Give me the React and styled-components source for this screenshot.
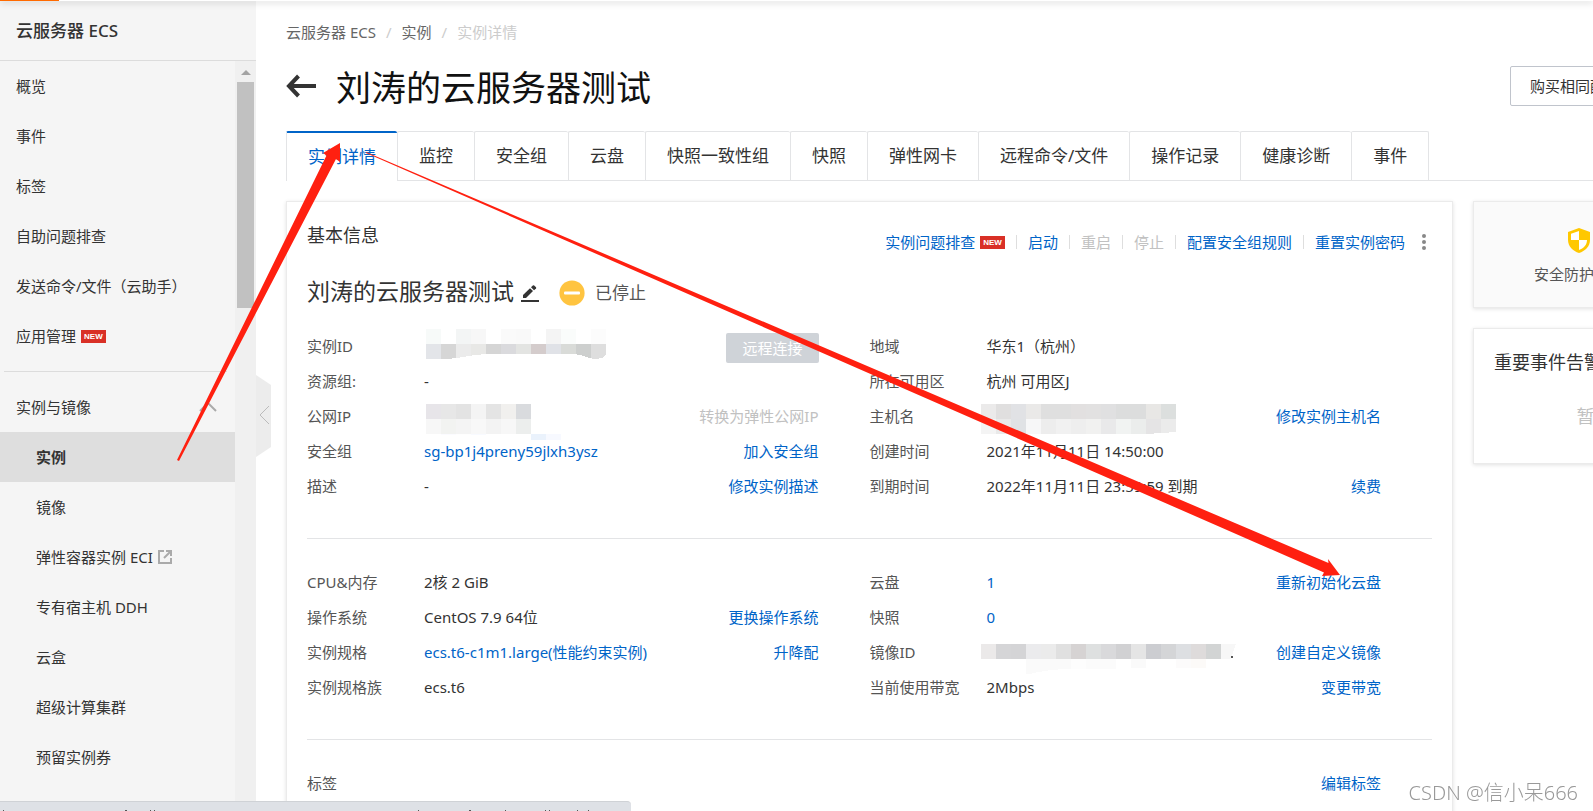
import React from 'react';
import styled, { createGlobalStyle } from 'styled-components';

const GlobalStyle = createGlobalStyle`
    * {
        box-sizing: border-box;
    }

    body {
        margin: 0;
        overflow: hidden;
        background: #fff;
        color: #333;
        font-family: "Noto Sans", "Noto Sans CJK SC", sans-serif;
        font-size: 15px;
        line-height: 24px;
    }

    a {
        color: inherit;
        text-decoration: none;
    }

    button {
        font: inherit;
        cursor: pointer;
    }
`;

const Layout = styled.div`
    display: flex;
    height: 100vh;
    overflow: hidden;
`;

const TopProgress = styled.div`
    position: fixed;
    top: 0;
    left: 0;
    right: 0;
    height: 1px;
    background: linear-gradient(90deg, #ff6a00 59px, #fff 59px);
    box-shadow: 0 1px 6px rgba(0, 0, 0, 0.5);
    z-index: 2;
`;

/* ---------- sidebar ---------- */

const Sidebar = styled.aside`
    flex: 0 0 256px;
    display: flex;
    flex-direction: column;
    background: #f5f5f5;
`;

const SidebarTitle = styled.div`
    flex: 0 0 61px;
    padding: 2px 16px 0;
    line-height: 58px;
    font-size: 17px;
    font-weight: 500;
    border-bottom: 1px solid #dcdcdc;
`;

const SidebarBody = styled.div`
    flex: 1;
    min-height: 0;
    display: flex;
`;

const Menu = styled.nav`
    flex: 1;
    overflow: hidden;
`;

const MenuItem = styled.a`
    display: flex;
    align-items: center;
    gap: 5px;
    height: 50px;
    padding-left: ${props => props.$nested ? '36px' : '16px'};
    padding-right: 18px;
    font-weight: ${props => props.$active ? 700 : 400};
    background: ${props => props.$active ? '#dedede' : 'transparent'};
`;

const MenuGroup = styled.button`
    display: flex;
    align-items: center;
    justify-content: space-between;
    width: 100%;
    height: 50px;
    padding: 0 18px 0 16px;
    border: 0;
    background: none;
    color: inherit;
`;

const MenuDivider = styled.hr`
    margin: 10px 8px 10px 4px;
    border: 0;
    border-top: 1px solid #dcdcdc;
`;

const ScrollTrack = styled.div`
    flex: 0 0 21px;
    display: flex;
    flex-direction: column;
    align-items: center;
    padding-top: 9px;
    background: #f0f0f0;
`;

const ScrollThumb = styled.div`
    width: 17px;
    height: 226px;
    margin-top: 7px;
    background: #c1c1c1;
`;

const CollapseButton = styled.button`
    position: absolute;
    left: 256px;
    top: 375px;
    padding: 0;
    border: 0;
    background: none;
    line-height: 0;
`;

const Badge = styled.span`
    padding: 0 3px;
    font-family: "Liberation Sans", Arial, sans-serif;
    font-size: 8px;
    font-weight: 700;
    line-height: 13px;
    color: #fff;
    background: #d93026;
`;

/* ---------- main ---------- */

const Main = styled.main`
    flex: 1 0 auto;
    min-width: 1660px;
    padding: 17px 20px 0 30px;
`;

const Breadcrumb = styled.nav`
    display: flex;
    gap: 10px;
    line-height: 30px;
    color: #666;
`;

const Muted = styled.span`
    color: #ccc;
`;

const Header = styled.header`
    display: flex;
    align-items: center;
    gap: 19px;
    margin: 15px 0 21px;
    height: 48px;
`;

const BackLink = styled.a`
    line-height: 0;
`;

const Title = styled.h1`
    flex: 1;
    margin: 0;
    padding-top: 4px;
    font-size: 35px;
    font-weight: 400;
    line-height: 48px;
    color: #111;
`;

const HeaderActions = styled.div`
    display: flex;
    gap: 10px;
    flex: 0 0 386px;
`;

const OutlineButton = styled.button`
    height: 40px;
    padding: 0 19px;
    border: 1px solid #c0c4cc;
    border-radius: 2px;
    background: #fff;
    color: #333;
`;

const Tabs = styled.div`
    display: flex;
    height: 50px;
    border-bottom: 1px solid #e3e4e6;
`;

const Tab = styled.button`
    height: ${props => props.$active ? '50px' : '49px'};
    padding: 0 21px;
    border: 0;
    border-left: 1px solid #e3e4e6;
    border-top: ${props => props.$active ? '2px solid #0064c8' : '1px solid #e3e4e6'};
    border-radius: 2px 2px 0 0;
    background: #fff;
    font-size: 17px;
    color: ${props => props.$active ? '#0064c8' : '#333'};

    &:last-child {
        border-right: 1px solid #e3e4e6;
    }
`;

const Columns = styled.div`
    display: grid;
    grid-template-columns: minmax(0, 1167px) minmax(0, 1fr);
    gap: 20px;
    align-items: start;
    margin-top: 20px;
`;

const Card = styled.section`
    padding: 20px;
    border: 1px solid #ebebeb;
    background: ${props => props.$grey ? '#fafafa' : '#fff'};
    box-shadow: 0 1px 4px rgba(0, 0, 0, 0.12);
`;

const CardHead = styled.div`
    display: flex;
    justify-content: space-between;
    height: 34px;
`;

const CardTitle = styled.h2`
    margin: 0;
    font-size: 18px;
    font-weight: 400;
    line-height: 26px;
`;

const Actions = styled.div`
    display: flex;
    align-items: center;
    height: 28px;
    margin-top: 6px;
`;

const Action = styled.button`
    display: flex;
    align-items: center;
    gap: 5px;
    padding: 0 11px;
    border: 0;
    background: none;
    line-height: 14px;
    color: #0064c8;

    & + & {
        border-left: 1px solid #dedede;
    }

    &:disabled {
        color: #c1c1c1;
    }
`;

const MoreButton = styled.button`
    padding: 0 6px;
    border: 0;
    background: none;
    line-height: 0;
`;

const NameRow = styled.div`
    display: flex;
    align-items: center;
    height: 34px;
    margin: 20px 0 18px;
`;

const InstanceName = styled.h3`
    align-self: flex-start;
    margin: 0 7px 0 0;
    font-size: 23px;
    font-weight: 400;
    line-height: 30px;
`;

const IconButton = styled.button`
    margin-right: 20px;
    padding: 0;
    border: 0;
    background: none;
    line-height: 0;
`;

const Status = styled.span`
    display: flex;
    align-items: center;
    gap: 10px;
    font-size: 17px;
    color: #555;
`;

const Section = styled.div`
    display: grid;
    grid-template-columns: 1fr 1fr;

    & + & {
        margin-top: 35px;
        padding-top: 25px;
        border-top: 1px solid #e3e4e6;
    }
`;

const Fields = styled.dl`
    margin: 0;
    padding-right: 51px;
`;

const Field = styled.div`
    display: flex;
    align-items: center;
    height: 35px;
    white-space: nowrap;
`;

const Label = styled.dt`
    flex: 0 0 117px;
    color: #555;
`;

const Value = styled.dd`
    flex: 1;
    margin: 0;
    color: ${props => props.$link ? '#0064c8' : '#333'};
`;

const FieldAction = styled.dd`
    margin: 0;
    color: ${props => props.$disabled ? '#c1c1c1' : '#0064c8'};
`;

const ConnectAction = styled(FieldAction)`
    align-self: flex-end;
    height: 30px;
`;

const ConnectButton = styled.button`
    height: 30px;
    padding: 0 16px;
    border: 0;
    border-radius: 2px;
    background: #cfd3d8;
    color: #fff;
`;

const MosaicSvg = styled.svg`
    display: block;
    overflow: visible;
`;

const SideColumn = styled.div`
    display: grid;
    gap: 20px;
`;

const StatGrid = styled.div`
    display: grid;
    grid-template-columns: 212px 1fr;
    margin: 0 -21px;
`;

const Stat = styled.div`
    display: flex;
    flex-direction: column;
    align-items: center;
    gap: 9px;
    padding-top: 6px;
    height: 65px;
    color: #555;
`;

const Empty = styled.p`
    margin: 27px 0 13px;
    font-size: 18px;
    line-height: 28px;
    text-align: center;
    color: #c1c1c1;
`;

/* ---------- overlays ---------- */

const StatusBar = styled.div`
    position: fixed;
    left: 0;
    bottom: 0;
    width: 631px;
    height: 10px;
    border-top: 1px solid #cfd2d6;
    border-top-right-radius: 4px;
    background: #dee1e6;
    line-height: 0;
`;

const Watermark = styled.div`
    position: fixed;
    right: 15px;
    bottom: 4px;
    font-size: 20px;
    font-weight: 300;
    line-height: 28px;
    color: #999;
    text-shadow: 0 0 2px #fff;
`;

const ArrowLayer = styled.svg`
    position: fixed;
    left: 0;
    top: 0;
    pointer-events: none;
    z-index: 3;
`;

const MENU = ['概览', '事件', '标签', '自助问题排查', '发送命令/文件（云助手）'];

const SUB_MENU = ['镜像', '弹性容器实例 ECI', '专有宿主机 DDH', '云盒', '超级计算集群', '预留实例券'];

const TABS = ['实例详情', '监控', '安全组', '云盘', '快照一致性组', '快照', '弹性网卡',
    '远程命令/文件', '操作记录', '健康诊断', '事件'];

// One string per mosaic row, a colour for each 15px cell.
const MOSAICS = {
    instance: {
        x: 2,
        y: 1,
        rows: [
            '#f7faf9 #fff #f3f5f5 #f7f7f7 #fff #fafafa #f9f9f9 #fff #f4f4f4 #fafcfb #fff #fcfcfc',
            '#e3e5e9 #d6d6d6 #ebebeb #e8e8e6 #d5d5d5 #dadadd #e3e4e2 #d4cccc #e0e2e7 #d9dbd8 #cdcfce #dedede',
        ],
        cut: 'M17 31C40 31 42 26 70 26H150C162 27 164 31 172 31Q182 30 182 26V32H17Z',
    },
    ip: {
        x: 2,
        y: 6,
        rows: [
            '#e7e5e9 #e7e7e7 #e3e3e3 #f4f4f4 #e4e4e4 #f1f0ee #d9dbde',
            '#f7f7f7 #f2f3f1 #f4f4f4 #f8f8f8 #f3f3f3 #f7f7f7 #eceeed',
            '#fff #fbfbff #fefefe #f8faff #fff #fff #fff #eaf2fc #f7f9ff',
        ],
        cut: 'M2 52V37H107V42H138Q140 38 140 36V52Z',
    },
    host: {
        x: -6,
        y: 6,
        rows: [
            '#ebeaea #e0dfdf #e1e2e5 #eae9e8 #dfdfdf #dfdfdf #e2e0e0 #e2e1e1 #e0e0e1 #dcdddd #dcdddd #e8e7e5 #dcdfde',
            '#f4f4f4 #e9e9e9 #e0e2e5 #f7f7f8 #ededed #f1f1f1 #eeeeee #f1f1f0 #e9e9ea #f1f3f2 #ebedec #e5e4e5 #ebebeb',
        ],
        cut: 'M159 36Q174 35 189 34V37H159Z',
    },
    image: {
        x: -6,
        y: 10,
        rows: [
            '#ebe9e9 #d5d5d7 #d4d4d6 #ebebed #ebebeb #e0e0e0 #d6d3d3 #dee0e0 #d9d9db #d1d1d3 #e5e5e5 #cccdd1 #d4d5d7 #dddfe2 #dedbdb #d2d4d4 #f7f7f7',
            '#fff #fff #fff #fafafa #fafafa #fafafa #fdfdfd #fbfbfb #fbfbfb #fff #fafafa #fff #fff #fcfbfb #fcfaf8 #fff #fff',
        ],
        cut: 'M39 41Q60 35 84 35L180 34H249V25H244L249 10V42H39Z',
        dot: true,
    },
};

const BASIC_LEFT = [
    { label: '实例ID', mosaic: 'instance', connect: true },
    { label: '资源组:', value: '-' },
    { label: '公网IP', mosaic: 'ip', action: '转换为弹性公网IP', disabled: true },
    { label: '安全组', value: 'sg-bp1j4preny59jlxh3ysz', link: true, action: '加入安全组' },
    { label: '描述', value: '-', action: '修改实例描述' },
];

const BASIC_RIGHT = [
    { label: '地域', value: '华东1（杭州）' },
    { label: '所在可用区', value: '杭州 可用区J' },
    { label: '主机名', mosaic: 'host', action: '修改实例主机名' },
    { label: '创建时间', value: '2021年11月11日 14:50:00' },
    { label: '到期时间', value: '2022年11月11日 23:59:59 到期', action: '续费' },
];

const CONFIG_LEFT = [
    { label: 'CPU&内存', value: '2核 2 GiB' },
    { label: '操作系统', value: 'CentOS 7.9 64位', action: '更换操作系统' },
    { label: '实例规格', value: 'ecs.t6-c1m1.large(性能约束实例)', link: true, action: '升降配' },
    { label: '实例规格族', value: 'ecs.t6' },
];

const CONFIG_RIGHT = [
    { label: '云盘', value: '1', link: true, action: '重新初始化云盘' },
    { label: '快照', value: '0', link: true },
    { label: '镜像ID', mosaic: 'image', action: '创建自定义镜像' },
    { label: '当前使用带宽', value: '2Mbps', action: '变更带宽' },
];

function Mosaic({ name }) {
    const { x, y, rows, cut, dot } = MOSAICS[name];
    return (
        <MosaicSvg width="240" height="35" viewBox="0 0 240 35" shapeRendering="crispEdges">
            {rows.map((row, r) => row.split(' ').map((fill, c) => (
                <rect key={`${r}-${c}`} x={x + c * 15} y={y + r * 15} width="15" height="15" fill={fill} />
            )))}
            <path d={cut} fill="#fff" />
            {dot && <rect x="244" y="22" width="2" height="2" fill="#555" />}
        </MosaicSvg>
    );
}

function FieldList({ items }) {
    return (
        <Fields>
            {items.map(item => (
                <Field key={item.label}>
                    <Label>{item.label}</Label>
                    <Value $link={item.link}>
                        {item.mosaic && <Mosaic name={item.mosaic} />}
                        {item.link ? <a href="#detail">{item.value}</a> : item.value}
                    </Value>
                    {item.connect && (
                        <ConnectAction><ConnectButton disabled>远程连接</ConnectButton></ConnectAction>
                    )}
                    {item.action && (
                        <FieldAction $disabled={item.disabled}>
                            {item.disabled ? item.action : <a href="#edit">{item.action}</a>}
                        </FieldAction>
                    )}
                </Field>
            ))}
        </Fields>
    );
}

function ExternalIcon() {
    return (
        <svg width="14" height="14" viewBox="0 0 14 14" fill="none" stroke="#aaa" strokeWidth="2">
            <path d="M6 1H1V13H13V8" />
            <path d="M8 1H13V6M13 1L6 8" />
        </svg>
    );
}

function SideMenu() {
    return (
        <Sidebar>
            <SidebarTitle>云服务器 ECS</SidebarTitle>
            <SidebarBody>
                <Menu>
                    {MENU.map(item => <MenuItem key={item} href="#menu">{item}</MenuItem>)}
                    <MenuItem href="#menu">应用管理<Badge>NEW</Badge></MenuItem>
                    <MenuDivider />
                    <MenuGroup>
                        实例与镜像
                        <svg width="18" height="10" viewBox="0 0 18 10" fill="none" stroke="#aaa" strokeWidth="2">
                            <path d="M1 9L9 1L17 9" />
                        </svg>
                    </MenuGroup>
                    <MenuItem href="#menu" $nested $active>实例</MenuItem>
                    {SUB_MENU.map(item => (
                        <MenuItem key={item} href="#menu" $nested>
                            {item}
                            {item.endsWith('ECI') && <ExternalIcon />}
                        </MenuItem>
                    ))}
                </Menu>
                <ScrollTrack>
                    <svg width="10" height="5" viewBox="0 0 10 5"><path d="M0 5L5 0L10 5Z" fill="#a3a3a3" /></svg>
                    <ScrollThumb />
                </ScrollTrack>
            </SidebarBody>
            <CollapseButton aria-label="收起">
                <svg width="15" height="82" viewBox="0 0 15 82" fill="none">
                    <path d="M0 0L15 10V72L0 82Z" fill="#ececec" />
                    <path d="M13 31L4 40L13 49" stroke="#bbb" />
                </svg>
            </CollapseButton>
        </Sidebar>
    );
}

function InstanceCard() {
    return (
        <Card>
            <CardHead>
                <CardTitle>基本信息</CardTitle>
                <Actions>
                    <Action>实例问题排查<Badge>NEW</Badge></Action>
                    <Action>启动</Action>
                    <Action disabled>重启</Action>
                    <Action disabled>停止</Action>
                    <Action>配置安全组规则</Action>
                    <Action>重置实例密码</Action>
                    <MoreButton aria-label="更多">
                        <svg width="4" height="16" viewBox="0 0 4 16" fill="#888">
                            <circle cx="2" cy="2" r="2" />
                            <circle cx="2" cy="8" r="2" />
                            <circle cx="2" cy="14" r="2" />
                        </svg>
                    </MoreButton>
                </Actions>
            </CardHead>
            <NameRow>
                <InstanceName>刘涛的云服务器测试</InstanceName>
                <IconButton aria-label="编辑">
                    <svg width="18" height="17" viewBox="0 0 18 17" fill="#333">
                        <path d="M2 13V10L9 3.200L12 6L5 13Z" />
                        <path d="M10 2.200L11.800 .5Q12.500 0 13.200 .6L15 2.300Q15.500 3 15 3.500L13 5.200Z" />
                        <path d="M0 15H18V17H0Z" />
                    </svg>
                </IconButton>
                <Status>
                    <svg width="26" height="26" viewBox="0 0 26 26">
                        <circle cx="13" cy="13" r="12.600" fill="#ffc440" />
                        <rect x="5" y="11.500" width="16" height="3" rx="1" fill="#fff" />
                    </svg>
                    已停止
                </Status>
            </NameRow>
            <Section>
                <FieldList items={BASIC_LEFT} />
                <FieldList items={BASIC_RIGHT} />
            </Section>
            <Section>
                <FieldList items={CONFIG_LEFT} />
                <FieldList items={CONFIG_RIGHT} />
            </Section>
            <Section>
                <FieldList items={[{ label: '标签' }]} />
                <FieldList items={[{ label: '', action: '编辑标签' }]} />
            </Section>
        </Card>
    );
}

function App() {
    return (
        <>
            <GlobalStyle />
            <TopProgress />
            <Layout>
                <SideMenu />
                <Main>
                    <Breadcrumb>
                        <a href="#ecs">云服务器 ECS</a>
                        <Muted>/</Muted>
                        <a href="#list">实例</a>
                        <Muted>/</Muted>
                        <Muted>实例详情</Muted>
                    </Breadcrumb>
                    <Header>
                        <BackLink href="#list" aria-label="返回">
                            <svg width="31" height="24" viewBox="0 0 31 24" fill="none" stroke="#333" strokeWidth="4">
                                <path d="M12.500 2L3 12L12.500 22M3 12H30" />
                            </svg>
                        </BackLink>
                        <Title>刘涛的云服务器测试</Title>
                        <HeaderActions>
                            <OutlineButton>购买相同配置</OutlineButton>
                        </HeaderActions>
                    </Header>
                    <Tabs role="tablist">
                        {TABS.map((tab, i) => (
                            <Tab key={tab} role="tab" aria-selected={i === 0} $active={i === 0}>{tab}</Tab>
                        ))}
                    </Tabs>
                    <Columns>
                        <InstanceCard />
                        <SideColumn>
                            <Card $grey>
                                <StatGrid>
                                    <Stat>
                                        <svg width="22" height="25" viewBox="0 0 22 25">
                                            <path d="M11 0L22 4V12C22 18.500 17 23 11 25C5 23 0 18.500 0 12V4Z" fill="#ffc800" />
                                            <path d="M11 3V12H3V5.700ZM11 12H19C19 17 15.500 20.500 11 22Z" fill="#fff" />
                                        </svg>
                                        安全防护状态
                                    </Stat>
                                </StatGrid>
                            </Card>
                            <Card>
                                <CardTitle>重要事件告警</CardTitle>
                                <Empty>暂无未处理的重要事件告警</Empty>
                            </Card>
                        </SideColumn>
                    </Columns>
                </Main>
            </Layout>
            <StatusBar>
                <svg width="631" height="9" viewBox="0 0 631 9" fill="#555">
                    <path d="M101 -1h25v1h-25z" fill="#d07a76" />
                    <path d="M3 8h1v1h-1zM125 8h2v1h-2zM150 8h1v1h-1zM154 8h1v1h-1zM418 8h1v1h-1zM469 8h2v1h-2zM505 8h1v1h-1zM545 8h1v1h-1zM549 8h1v1h-1zM577 8h1v1h-1zM588 8h1v1h-1z" />
                </svg>
            </StatusBar>
            <Watermark>CSDN @信小呆666</Watermark>
            <ArrowLayer width="1593" height="811" viewBox="0 0 1593 811" fill="#ff2010">
                <path d="M177 460L326.500 155.500L323 153L340 143L340 162L336 159L179 461Z" />
                <path d="M366 152L1328.500 563L1328 559L1340 575L1322 576L1324 572.500L366 153Z" />
            </ArrowLayer>
        </>
    );
}

export default App;
